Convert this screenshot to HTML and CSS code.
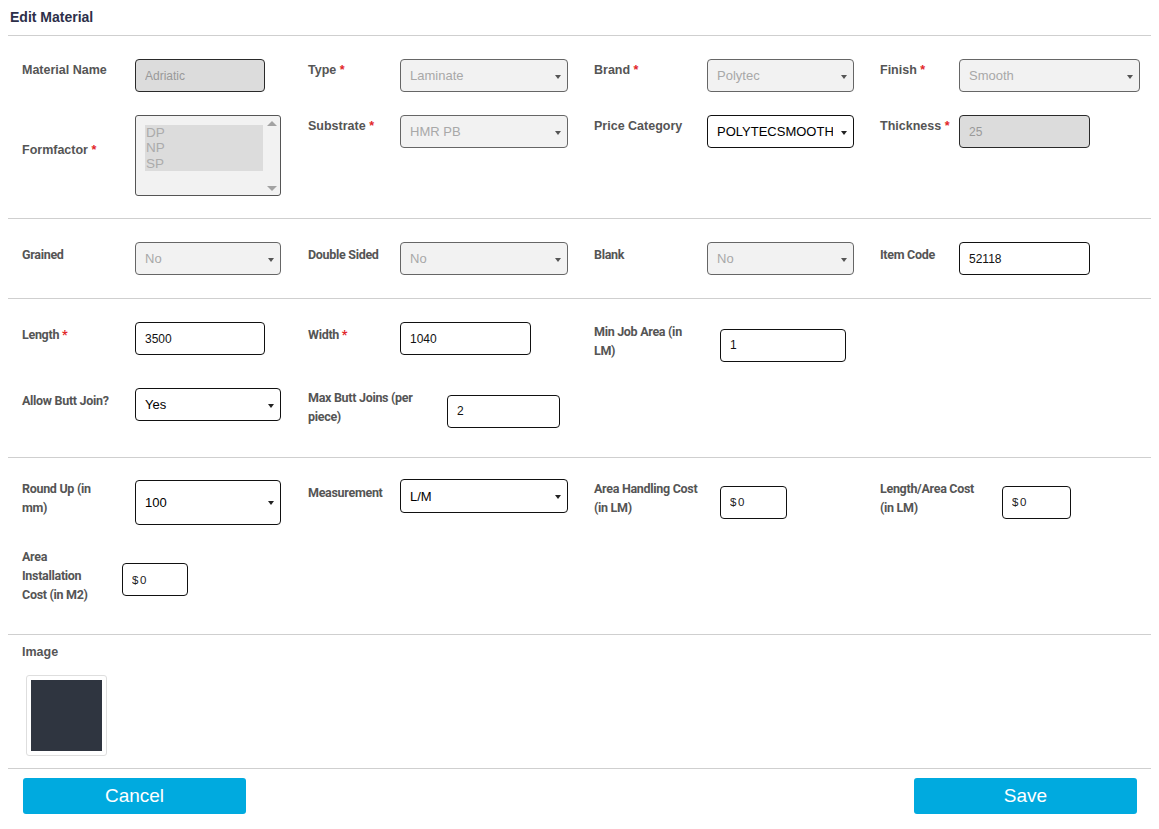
FILE: index.html
```html
<!DOCTYPE html>
<html lang="en">

<head>
  <meta name="viewport" content="width=device-width, initial-scale=1.0">
  <title>Edit Material</title>
  <link rel="stylesheet" href="styles.css">
</head>

<body>
  <main id="panel">
    <h1 class="title">Edit Material</h1>

    <section class="group loose">
      <div class="row">
        <div class="field">
          <label class="lbl top l113">Material Name</label>
          <input class="ctl locked w130" type="text" value="Adriatic" disabled>
        </div>
        <div class="field">
          <label class="lbl top l92">Type <span class="req">*</span></label>
          <span class="select w168 off"><select disabled><option>Laminate</option></select></span>
        </div>
        <div class="field">
          <label class="lbl top l113">Brand <span class="req">*</span></label>
          <span class="select w147 off"><select disabled><option>Polytec</option></select></span>
        </div>
        <div class="field">
          <label class="lbl top l79">Finish <span class="req">*</span></label>
          <span class="select w181 off"><select disabled><option>Smooth</option></select></span>
        </div>
      </div>

      <div class="row">
        <div class="field">
          <label class="lbl top l113">Formfactor <span class="req">*</span></label>
          <div class="listbox">
            <div class="opts">
              <div class="opt">DP</div>
              <div class="opt">NP</div>
              <div class="opt">SP</div>
            </div>
            <div class="scroll">
              <span class="up"></span>
              <span class="down"></span>
            </div>
          </div>
        </div>
        <div class="field al-top">
          <label class="lbl top l92">Substrate <span class="req">*</span></label>
          <span class="select w168 off"><select disabled><option>HMR PB</option></select></span>
        </div>
        <div class="field al-top">
          <label class="lbl top l113">Price Category</label>
          <span class="select w147"><select><option>POLYTECSMOOTH</option></select></span>
        </div>
        <div class="field al-top">
          <label class="lbl top l79">Thickness <span class="req">*</span></label>
          <input class="ctl locked w131" type="text" value="25" disabled>
        </div>
      </div>
    </section>

    <section class="group">
      <div class="row">
        <div class="field">
          <label class="lbl l113">Grained</label>
          <span class="select w146 off"><select disabled><option>No</option></select></span>
        </div>
        <div class="field">
          <label class="lbl l92">Double Sided</label>
          <span class="select w168 off"><select disabled><option>No</option></select></span>
        </div>
        <div class="field">
          <label class="lbl l113">Blank</label>
          <span class="select w147 off"><select disabled><option>No</option></select></span>
        </div>
        <div class="field">
          <label class="lbl l79">Item Code</label>
          <input class="ctl w131" type="text" value="52118">
        </div>
      </div>
    </section>

    <section class="group">
      <div class="row">
        <div class="field">
          <label class="lbl l113">Length <span class="req">*</span></label>
          <input class="ctl w130" type="text" value="3500">
        </div>
        <div class="field">
          <label class="lbl l92">Width <span class="req">*</span></label>
          <input class="ctl w131" type="text" value="1040">
        </div>
        <div class="field">
          <label class="lbl l126">Min Job Area (in<br>LM)</label>
          <input class="ctl w126" type="text" value="1">
        </div>
      </div>

      <div class="row">
        <div class="field">
          <label class="lbl l113">Allow Butt Join?</label>
          <span class="select w146"><select><option>Yes</option><option>No</option></select></span>
        </div>
        <div class="field">
          <label class="lbl l139">Max Butt Joins (per<br>piece)</label>
          <input class="ctl w113" type="text" value="2">
        </div>
      </div>
    </section>

    <section class="group costs">
      <div class="row">
        <div class="field">
          <label class="lbl l113">Round Up (in<br>mm)</label>
          <span class="select w146 tall"><select><option>100</option></select></span>
        </div>
        <div class="field">
          <label class="lbl l92">Measurement</label>
          <span class="select w168 mid"><select><option>L/M</option></select></span>
        </div>
        <div class="field">
          <label class="lbl l126">Area Handling Cost<br>(in LM)</label>
          <input class="ctl money w67" type="text" value="$0">
        </div>
        <div class="field">
          <label class="lbl l122">Length/Area Cost<br>(in LM)</label>
          <input class="ctl money w69" type="text" value="$0">
        </div>
      </div>

      <div class="row">
        <div class="field">
          <label class="lbl l100">Area<br>Installation<br>Cost (in M2)</label>
          <input class="ctl money w66" type="text" value="$0">
        </div>
      </div>
    </section>

    <section class="group image-group">
      <label class="lbl top">Image</label>
      <div class="thumb">
        <div class="swatch"></div>
      </div>
    </section>

    <footer class="actions">
      <button type="button" class="button">Cancel</button>
      <button type="button" class="button">Save</button>
    </footer>
  </main>
</body>

</html>
```

FILE: styles.css
```css
body {
  margin: 8px;
  font-family: "Liberation Sans", Arial, Helvetica, sans-serif;
  background-color: white;
  color: #333;
}

#panel {
  width: 1144px;
}

.title {
  margin: 0;
  padding: 1px 2px 10px;
  font-size: 14px;
  line-height: 16px;
  font-weight: bold;
  color: #2d2f49;
}

.group {
  border-top: 1px solid #cfcfcf;
  padding: 23px 0 23px;
}

.group.loose {
  padding-bottom: 22px;
}

.group.costs {
  padding: 21px 0 22px;
}

.row {
  display: grid;
  grid-template-columns: repeat(4, 286px);
  align-items: start;
}

.row + .row {
  margin-top: 20px;
}

.loose .row + .row {
  margin-top: 23px;
}

.costs .row + .row {
  margin-top: 22px;
}

.field {
  display: flex;
  align-items: center;
  padding-left: 14px;
}

.lbl {
  flex-shrink: 0;
  margin-bottom: 8px;
  font-family: Roboto, "Liberation Sans", sans-serif;
  font-size: 12.5px;
  line-height: 19px;
  font-weight: bold;
  letter-spacing: -0.3px;
  white-space: nowrap;
  color: #555;
}

.lbl.top {
  margin-bottom: 11px;
  font-family: "Liberation Sans", Arial, sans-serif;
  font-size: 12.5px;
  letter-spacing: 0;
}

.req {
  color: #e2262a;
}

.l79 { width: 79px; }
.l92 { width: 92px; }
.l100 { width: 100px; }
.l113 { width: 113px; }
.l122 { width: 122px; }
.l126 { width: 126px; }
.l139 { width: 139px; }

.w66 { width: 66px; }
.w67 { width: 67px; }
.w69 { width: 69px; }
.w113 { width: 113px; }
.w126 { width: 126px; }
.w130 { width: 130px; }
.w131 { width: 131px; }
.w146 { width: 146px; }
.w147 { width: 147px; }
.w168 { width: 168px; }
.w181 { width: 181px; }

.ctl {
  box-sizing: border-box;
  height: 33px;
  margin: 0;
  padding: 0 0 0 9px;
  border: 1px solid #111;
  border-radius: 4px;
  background-color: white;
  font-family: "Liberation Sans", Arial, sans-serif;
  font-size: 12px;
  color: #111;
  outline: none;
}

.ctl.locked {
  background-color: #dcdcdc;
  border-color: #2a2a2a;
  color: #999;
}

.ctl.money {
  font-size: 11.5px;
  padding-left: 9px;
  letter-spacing: 1.5px;
  color: #222;
}

.select {
  position: relative;
  display: block;
  flex-shrink: 0;
  height: 33px;
}

.select select {
  box-sizing: border-box;
  width: 100%;
  height: 100%;
  margin: 0;
  padding: 0 20px 0 9px;
  border: 1px solid #111;
  border-radius: 4px;
  background-color: white;
  font-family: "Liberation Sans", Arial, sans-serif;
  font-size: 13px;
  color: #000;
  appearance: none;
  -webkit-appearance: none;
  outline: none;
}

.select::after {
  content: "";
  position: absolute;
  right: 7px;
  top: 50%;
  margin-top: -1px;
  border-left: 3.5px solid transparent;
  border-right: 3.5px solid transparent;
  border-top: 4px solid #222;
}

.select.off select {
  background-color: #f2f2f2;
  border-color: #666;
  color: #a8a8a8;
  opacity: 1;
}

.select.off::after {
  border-top-color: #555;
}

.select.tall {
  height: 45px;
}

.select.mid {
  height: 34px;
}

.al-top {
  align-self: start;
}

.listbox {
  box-sizing: border-box;
  display: flex;
  width: 146px;
  height: 81px;
  border: 1px solid #555;
  border-radius: 3px;
  background-color: #f2f2f2;
}

.opts {
  flex: 1;
  padding: 9px 0 0 9px;
}

.opt {
  height: 15.3px;
  line-height: 15px;
  padding-left: 1px;
  background-color: #dcdcdc;
  font-size: 13.5px;
  color: #ababab;
}

.scroll {
  width: 17px;
  display: flex;
  flex-direction: column;
  justify-content: space-between;
  align-items: center;
  padding: 5px 0 4px;
}

.up {
  border-left: 5px solid transparent;
  border-right: 5px solid transparent;
  border-bottom: 5px solid #a3a3a3;
}

.down {
  border-left: 5px solid transparent;
  border-right: 5px solid transparent;
  border-top: 5px solid #a3a3a3;
}

.image-group {
  padding: 8px 0 12px 14px;
}

.image-group .lbl {
  display: block;
  margin-bottom: 13px;
}

.thumb {
  box-sizing: border-box;
  width: 81px;
  height: 81px;
  margin-left: 4px;
  padding: 4px;
  border: 1px solid #dedede;
  border-radius: 3px;
}

.swatch {
  width: 71px;
  height: 71px;
  background-color: #2f3540;
}

.actions {
  display: flex;
  justify-content: space-between;
  border-top: 1px solid #cfcfcf;
  padding: 9px 15px 0;
}

.button {
  width: 223px;
  height: 36px;
  border: none;
  border-radius: 3px;
  background-color: #00aadf;
  color: white;
  font-family: "Liberation Sans", Arial, sans-serif;
  font-size: 19px;
  cursor: pointer;
}
```
